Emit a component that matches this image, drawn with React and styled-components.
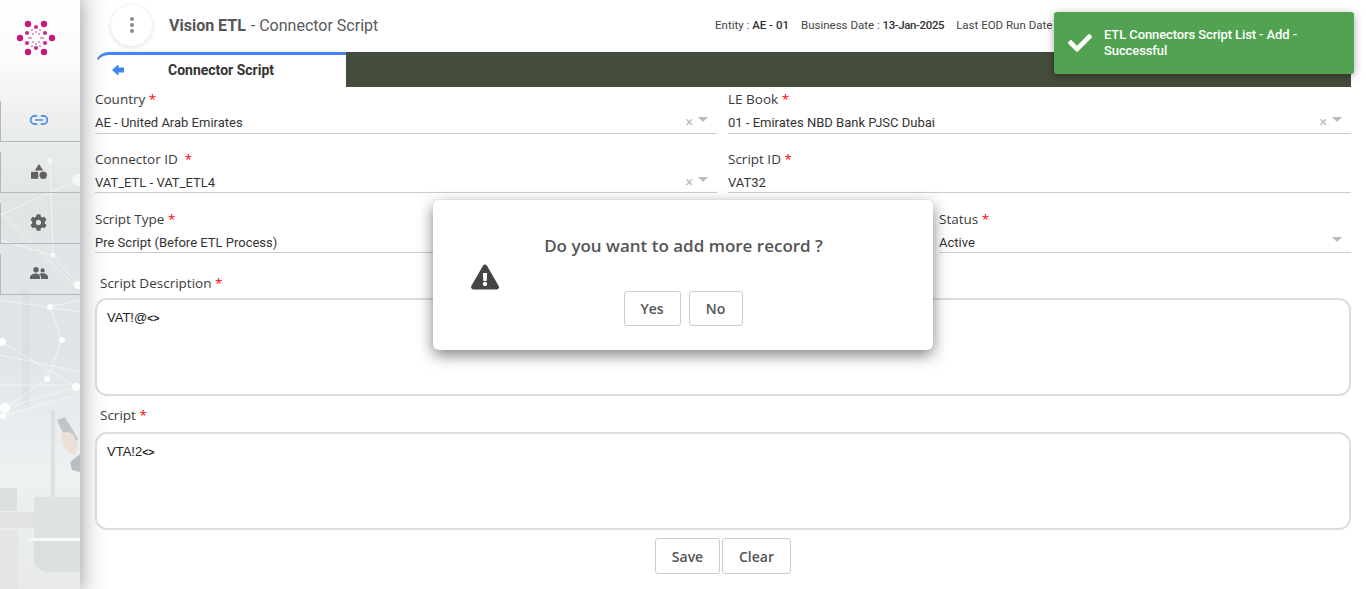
import React from 'react'
import styled, { createGlobalStyle } from 'styled-components'
import { Link2 } from 'lucide-react'
import { FaCog, FaExclamationTriangle, FaCheck } from 'react-icons/fa'

const ShapesIcon = () => (
  <svg viewBox="0 0 16 15" width="16" height="15" fill="currentColor">
    <path d="M8 0 L12.2 6.5 H3.8 Z" />
    <rect x="0" y="7.8" width="7.2" height="7" />
    <circle cx="12.2" cy="11.3" r="3.7" />
  </svg>
)

const PeopleIcon = () => (
  <svg viewBox="0 0 18 12" width="18" height="12" fill="currentColor">
    <circle cx="6" cy="2.7" r="2.7" />
    <circle cx="12.6" cy="3.4" r="2.1" />
    <path d="M0 12 V10.2 C0 8 3.6 6.6 6 6.6 C8.4 6.6 10 8 10 10.2 V12 Z" />
    <path d="M9 7 C10 6.4 11.4 6.2 12.6 6.2 C15 6.2 18 7.8 18 9.8 V12 H11 V10 C11 8.8 10.2 7.8 9 7 Z" />
  </svg>
)

const navItems = [
  { key: 'link', icon: <Link2 size={20} strokeWidth={2} />, active: true },
  { key: 'shapes', icon: <ShapesIcon /> },
  { key: 'cog', icon: <FaCog size={17} /> },
  { key: 'users', icon: <PeopleIcon /> }
]

const outerDots = [[28, 24], [44, 24], [20, 38], [52, 38], [28, 52], [44, 52]]
const midDots = [[36, 27], [36, 48], [27, 33], [45, 33], [27, 43], [45, 43]]
const innerDots = [
  [32, 30], [40, 30], [31, 38], [41, 38], [32, 46], [40, 46],
  [33, 34], [39, 34], [33, 42], [39, 42], [36, 32], [36, 44], [29, 38], [43, 38]
]

const netLines = [
  [0, 215, 78, 180], [50, 161, 53, 255], [0, 212, 78, 288], [53, 255, 78, 285], [50, 307, 62, 340],
  [62, 340, 47, 379], [2, 342, 76, 387], [47, 379, 5, 408], [76, 387, 5, 408], [76, 395, 3, 416],
  [0, 300, 80, 312], [0, 355, 80, 372], [0, 385, 80, 385], [50, 307, 80, 300], [0, 240, 53, 255]
]
const netNodes = [
  [50, 161, 2.5, 0.6], [78, 180, 6, 0.6], [53, 255, 2.5, 0.7], [78, 285, 4, 0.8], [50, 307, 3, 0.9],
  [62, 340, 3, 0.9], [2, 342, 4, 0.9], [47, 379, 3, 0.9], [76, 387, 4, 1], [5, 408, 5, 1], [3, 416, 3, 1]
]

const Backdrop = () => (
  <BackdropSvg viewBox="0 0 80 589" width="80" height="589">
    <rect x="22" y="290" width="8" height="115" fill="#cfd6d8" opacity=".3" />
    <rect x="51" y="410" width="4" height="95" fill="#d6dadc" opacity=".7" />
    <rect x="0" y="488" width="17" height="23" rx="2" fill="#dcdfe0" />
    <rect x="0" y="512" width="34" height="16" fill="#e2e4e4" />
    <rect x="0" y="530" width="18" height="59" fill="#e3e5e6" />
    <path d="M34 500 q0-3 4-3 h42 v43 h-46z" fill="#dfe2e3" />
    <rect x="28" y="538" width="52" height="3" fill="#f7f8f8" />
    <path d="M34 541 h46 v31 h-34 q-12-3-12-14z" fill="#dcdfe0" />
    <path d="M57 420 l8-3 13 22 -3 6 -8-3z" fill="#b5b7b8" opacity=".75" />
    <path d="M61 434 q6-4 12 0 l5 10 -3 12 -11-8z" fill="#ecdfd7" />
    <path d="M70 462 l10-8 v18 l-8 -2z" fill="#a9adaf" opacity=".75" />
    {netLines.map(([x1, y1, x2, y2]) => (
      <line key={`${x1}-${y1}-${x2}`} x1={x1} y1={y1} x2={x2} y2={y2} stroke="#fff" strokeWidth="1" opacity=".55" />
    ))}
    {netNodes.map(([cx, cy, r, o]) => (
      <circle key={`${cx}-${cy}`} cx={cx} cy={cy} r={r} fill="#fff" opacity={o} />
    ))}
  </BackdropSvg>
)

const Logo = () => (
  <LogoSvg viewBox="0 0 72 76" width="72" height="76">
    {outerDots.map(([cx, cy]) => <circle key={`o${cx}${cy}`} cx={cx} cy={cy} r="3.2" fill="#c8187f" />)}
    {midDots.map(([cx, cy]) => <circle key={`m${cx}${cy}`} cx={cx} cy={cy} r="2.1" fill="#cc2a8c" />)}
    {innerDots.map(([cx, cy]) => <circle key={`i${cx}${cy}`} cx={cx} cy={cy} r="1.1" fill="#e08abf" />)}
  </LogoSvg>
)

const Select = ({ label, value, clearable, tall }) => (
  <Field>
    <Label>{label} <Star>*</Star></Label>
    <Value $tall={tall}>
      <span>{value}</span>
      {clearable && <Clear>×</Clear>}
      <Caret />
    </Value>
  </Field>
)

const App = () => {
  return (
    <Page>
      <GlobalStyle />
      <Sidebar>
        <Backdrop />
        <Logo />
        <Nav>
          {navItems.map(item => (
            <NavItem key={item.key} $active={item.active}>{item.icon}</NavItem>
          ))}
        </Nav>
      </Sidebar>

      <Main>
        <Header>
          <MenuButton>
            <Dot /><Dot /><Dot />
          </MenuButton>
          <Title><b>Vision ETL</b> - Connector Script</Title>
          <Info>
            <span>Entity : <b>AE - 01</b></span>
            <span>Business Date : <DateText>13-Jan-2025</DateText></span>
            <span>Last EOD Run Date</span>
          </Info>
        </Header>

        <TabBar>
          <Tab>
            <BackIcon viewBox="0 0 12 10" width="12" height="10">
              <path d="M0 5 L5.5 0 H6.5 V2.5 H12 V7.5 H6.5 V10 H5.5 Z" />
            </BackIcon>
            <TabLabel>Connector Script</TabLabel>
          </Tab>
          <TabFill />
        </TabBar>

        <Row $first>
          <Select label="Country" value="AE - United Arab Emirates" clearable tall />
          <Select label="LE Book" value="01 - Emirates NBD Bank PJSC Dubai" clearable tall />
        </Row>
        <Row>
          <Select label={<>Connector ID&nbsp;</>} value="VAT_ETL - VAT_ETL4" clearable />
          <Field>
            <Label>Script ID <Star>*</Star></Label>
            <Value><span>VAT32</span></Value>
          </Field>
        </Row>
        <Row $wide>
          <Field>
            <Label>Script Type <Star>*</Star></Label>
            <Value><span>Pre Script (Before ETL Process)</span></Value>
          </Field>
          <Select label="Status" value="Active" />
        </Row>

        <AreaLabel>Script Description <Star>*</Star></AreaLabel>
        <ScriptBox>VAT!@<Angle>{'<>'}</Angle></ScriptBox>
        <AreaLabel $second>Script <Star>*</Star></AreaLabel>
        <ScriptBox>VTA!2<Angle>{'<>'}</Angle></ScriptBox>

        <Actions>
          <ActionButton $w={65}>Save</ActionButton>
          <ActionButton $w={69}>Clear</ActionButton>
        </Actions>
      </Main>

      <Modal>
        <WarnIcon><FaExclamationTriangle size={28} /></WarnIcon>
        <ModalText>Do you want to add more record ?</ModalText>
        <ModalActions>
          <ModalButton $w={57}>Yes</ModalButton>
          <ModalButton $w={54}>No</ModalButton>
        </ModalActions>
      </Modal>

      <Toast>
        <FaCheck size={24} />
        <ToastText>ETL Connectors Script List - Add - Successful</ToastText>
      </Toast>
    </Page>
  )
}

export default App

const GlobalStyle = createGlobalStyle`
  html, body {
    margin: 0;
    height: 100%;
    overflow: hidden;
    background: #fff;
  }
  * {
    box-sizing: border-box;
  }
`

const Page = styled.div`
  position: relative;
  display: flex;
  width: 1366px;
  height: 589px;
  overflow: hidden;
  font-family: 'Open Sans', sans-serif;
  background: #fff;
`

const Sidebar = styled.aside`
  position: relative;
  z-index: 2;
  flex: 0 0 80px;
  height: 589px;
  overflow: hidden;
  background: linear-gradient(180deg, #fff 0, #fbfbfb 60px, #eceeef 120px, #e2e5e6 200px, #dfe4e6 350px, #e6ebed 410px, #eef1f2 470px, #e8eaea 589px);
  box-shadow: 0 0 18px rgba(0, 0, 0, 0.35);
`

const BackdropSvg = styled.svg`
  position: absolute;
  top: 0;
  left: 0;
  filter: blur(0.4px);
`

const LogoSvg = styled.svg`
  position: relative;
  display: block;
`

const Nav = styled.nav`
  position: relative;
  margin-top: 15px;
  display: flex;
  flex-direction: column;
`

const NavItem = styled.div`
  margin-top: 10px;
  height: 41px;
  display: flex;
  align-items: center;
  justify-content: center;
  padding: 0 4px 2px 0;
  border-left: 1px solid #b4b8ba;
  border-bottom: 1px solid #b4b8ba;
  color: ${p => (p.$active ? '#4a86e8' : '#5f6163')};
`

const Main = styled.main`
  flex: 1;
  min-width: 0;
  padding: 0 15px;
  display: flex;
  flex-direction: column;
  background: linear-gradient(90deg, #f1f1f1 0, #fff 30px);
`

const Header = styled.header`
  height: 52px;
  flex: none;
  display: flex;
  align-items: center;
  padding: 0 0 2px 16px;
`

const MenuButton = styled.div`
  width: 41px;
  height: 41px;
  border-radius: 50%;
  background: #fff;
  box-shadow: 0 1px 5px rgba(0, 0, 0, 0.14);
  display: flex;
  flex-direction: column;
  align-items: center;
  justify-content: center;
  gap: 2px;
`

const Dot = styled.i`
  width: 4px;
  height: 4px;
  border-radius: 50%;
  background: #8a8a8a;
`

const Title = styled.div`
  margin-left: 17px;
  font-family: Roboto, sans-serif;
  font-size: 16px;
  color: #5a5a5a;
  white-space: nowrap;

  b {
    margin-right: 1px;
    font-weight: 700;
    color: #555;
  }
`

const Info = styled.div`
  position: absolute;
  left: 715px;
  top: 18px;
  display: flex;
  gap: 12px;
  font-family: Roboto, sans-serif;
  font-size: 11.5px;
  color: #444;
  white-space: nowrap;

  b {
    font-weight: 500;
    color: #333;
  }
`

const DateText = styled.b`
  letter-spacing: -0.4px;
`

const TabBar = styled.div`
  height: 35px;
  flex: none;
  display: flex;
`

const Tab = styled.div`
  width: 251px;
  height: 35px;
  display: flex;
  align-items: center;
  padding: 0 0 3px 16px;
  border-top: 3px solid #4285f4;
  border-left: 1px solid transparent;
  border-top-left-radius: 14px;
`

const TabFill = styled.div`
  flex: 1;
  background: #444c3c;
`

const BackIcon = styled.svg`
  flex: none;
  fill: #4285f4;
`

const TabLabel = styled.span`
  margin-left: 44px;
  font-family: Roboto, sans-serif;
  font-size: 14px;
  font-weight: 700;
  color: #333;
`

const Row = styled.div`
  display: grid;
  grid-template-columns: ${p => (p.$wide ? '833px 412px' : '622px 623px')};
  column-gap: 11px;
  margin-top: 2px;
  margin-bottom: ${p => (p.$first ? '13px' : '14px')};
`

const Field = styled.div`
  display: flex;
  flex-direction: column;
`

const Label = styled.label`
  height: 20px;
  line-height: 20px;
  font-size: 13.5px;
  font-weight: 500;
  color: #3a3a3a;
  white-space: nowrap;
`

const Star = styled.span`
  color: #f00;
`

const Value = styled.div`
  height: ${p => (p.$tall ? '25px' : '24px')};
  padding-top: ${p => (p.$tall ? '2px' : '3px')};
  display: flex;
  align-items: center;
  font-family: Roboto, sans-serif;
  font-size: 13px;
  color: #333;
  border-bottom: 1px solid #ccc;

  span:first-child {
    flex: 1;
  }
`

const Clear = styled.span`
  margin-right: 5px;
  font-size: 14px;
  color: #bbb;
`

const Caret = styled.i`
  width: 0;
  height: 0;
  margin: 0 9px 5px 0;
  border-left: 5px solid transparent;
  border-right: 5px solid transparent;
  border-top: 5px solid #bbb;
`

const AreaLabel = styled.div`
  height: 20px;
  line-height: 20px;
  margin: ${p => (p.$second ? '9px 0 7px 5px' : '6px 0 5px 5px')};
  font-size: 13.5px;
  font-weight: 500;
  color: #3a3a3a;
`

const ScriptBox = styled.div`
  height: 98px;
  flex: none;
  padding: 10px;
  border: 2px solid #ddd;
  border-radius: 12px;
  font-family: 'Liberation Sans', Arial, sans-serif;
  font-size: 13px;
  line-height: 15px;
  color: #222;
  background: #fff;
`

const Angle = styled.span`
  font-size: 10.5px;
  font-weight: 700;
`

const Actions = styled.div`
  margin-top: 8px;
  display: flex;
  justify-content: center;
  gap: 2px;
`

const ActionButton = styled.button`
  width: ${p => p.$w}px;
  height: 36px;
  padding: 0;
  border: 1px solid #ccc;
  border-radius: 3px;
  background: #fff;
  font-family: 'Open Sans', sans-serif;
  font-size: 14px;
  font-weight: 600;
  color: #555;
`

const Modal = styled.div`
  position: absolute;
  z-index: 3;
  left: 433px;
  top: 200px;
  width: 500px;
  height: 150px;
  padding-top: 35px;
  background: #fff;
  border-radius: 6px;
  box-shadow: 0 5px 15px rgba(0, 0, 0, 0.5);
`

const WarnIcon = styled.div`
  position: absolute;
  left: 38px;
  top: 63px;
  color: #444;
  line-height: 0;
`

const ModalText = styled.div`
  text-align: center;
  padding-left: 1px;
  font-size: 17px;
  line-height: 22px;
  font-weight: 600;
  color: #555;
`

const ModalActions = styled.div`
  margin-top: 34px;
  display: flex;
  justify-content: center;
  gap: 8px;
`

const ModalButton = styled(ActionButton)`
  height: 35px;
`

const Toast = styled.div`
  position: absolute;
  z-index: 4;
  left: 1054px;
  top: 12px;
  width: 300px;
  height: 62px;
  display: flex;
  align-items: center;
  gap: 12px;
  padding: 0 36px 0 14px;
  color: #fff;
  background: #51a351;
  border-radius: 3px;
  box-shadow: 0 2px 8px rgba(0, 0, 0, 0.35);

  svg {
    flex: none;
  }
`

const ToastText = styled.div`
  font-family: Roboto, sans-serif;
  font-size: 13px;
  line-height: 16px;
  font-weight: 500;
  letter-spacing: -0.1px;
`
